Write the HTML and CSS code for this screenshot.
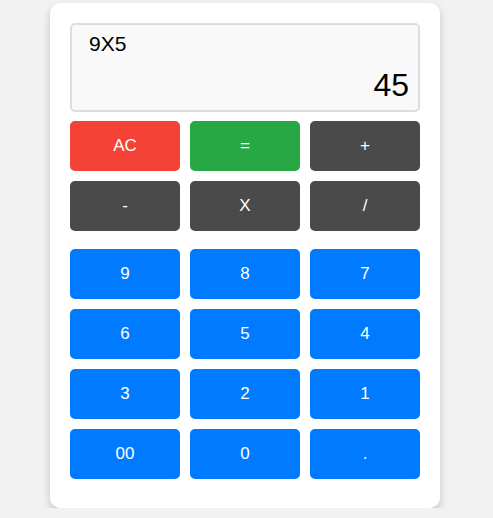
FILE: index.html
```html
<!DOCTYPE html>
<html lang="en">
<head>
  <meta charset="UTF-8">
  <title>Calculator</title>
  <meta name="viewport" content="width=device-width, initial-scale=1">
  <link rel="stylesheet" href="styles.css">
</head>
<body>
  <div class="calculator">
    <div class="display">
      <div class="expression">9X5</div>
      <div class="result">45</div>
    </div>

    <div class="keys ops">
      <button class="btn clear">AC</button>
      <button class="btn equal">=</button>
      <button class="btn op">+</button>
      <button class="btn op">-</button>
      <button class="btn op">X</button>
      <button class="btn op">/</button>
    </div>

    <div class="keys digits">
      <button class="btn num">9</button>
      <button class="btn num">8</button>
      <button class="btn num">7</button>
      <button class="btn num">6</button>
      <button class="btn num">5</button>
      <button class="btn num">4</button>
      <button class="btn num">3</button>
      <button class="btn num">2</button>
      <button class="btn num">1</button>
      <button class="btn num">00</button>
      <button class="btn num">0</button>
      <button class="btn num">.</button>
    </div>
  </div>
</body>
</html>
```

FILE: styles.css
```css
body {
  margin: 0;
  background: #f2f2f2;
  font-family: 'Liberation Sans', Arial, sans-serif;
}
.calculator {
  width: 350px;
  margin: 3px 0 0 50px;
  padding: 20px 20px 29px;
  background: #fff;
  border-radius: 10px;
  box-shadow: 0 4px 8px rgba(0, 0, 0, 0.2);
}
.display {
  height: 85px;
  border: 2px solid #ddd;
  border-radius: 5px;
  background: #f9f9f9;
  padding: 0 9px 0 17px;
  display: flex;
  flex-direction: column;
  justify-content: space-between;
  margin-bottom: 9px;
}
.expression {
  font-size: 21px;
  padding-top: 7px;
  color: #000;
}
.result {
  font-size: 32px;
  text-align: right;
  padding-bottom: 6px;
  color: #000;
}
.keys {
  display: grid;
  grid-template-columns: repeat(3, 110px);
  gap: 10px;
}
.digits {
  margin-top: 18px;
}
.btn {
  height: 50px;
  border: none;
  border-radius: 5px;
  color: #fff;
  font-size: 17px;
  font-family: inherit;
  cursor: pointer;
}
.clear {
  background: #f44336;
}
.equal {
  background: #28a745;
}
.op {
  background: #4a4a4a;
}
.num {
  background: #007bff;
}
```
